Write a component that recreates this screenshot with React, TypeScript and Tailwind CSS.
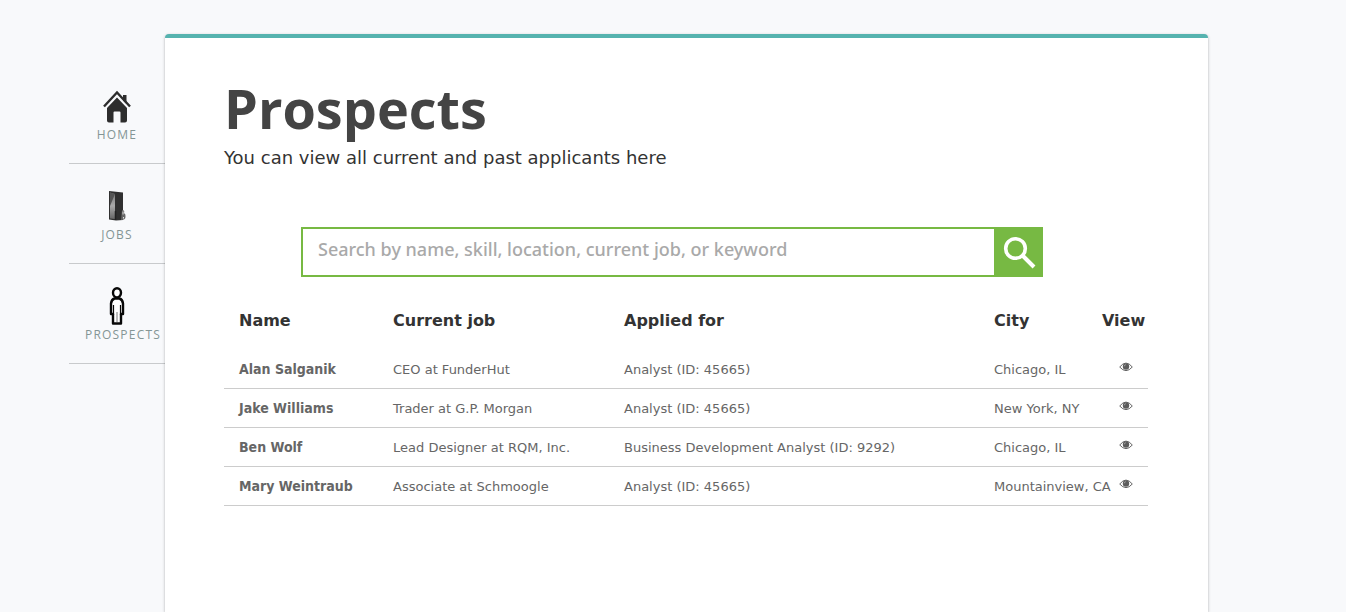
import React from "react";

function HomeIcon() {
  return (
    <svg viewBox="0 0 28 34" className="h-[34px] w-7" aria-hidden="true">
      <path d="M20 6h3.500v9L20 11.500z" fill="#2d2d2d" />
      <path d="M1 17.500 14 3.500l13 14" fill="none" stroke="#2d2d2d" strokeWidth="2.400" />
      <path d="M14 8.500 24 19v12.500q0 2-2 2h-4.500V23.500q0-1-1-1h-5q-1 0-1 1v10H6q-2 0-2-2V19z" fill="#2d2d2d" />
    </svg>
  );
}

function DoorIcon() {
  return (
    <svg viewBox="0 0 28 34" className="h-[34px] w-7" aria-hidden="true">
      <defs>
        <linearGradient id="glass" x1="0" y1="0" x2="0" y2="1">
          <stop offset="0" stopColor="#777" />
          <stop offset="0.500" stopColor="#aaa" />
          <stop offset="1" stopColor="#666" />
        </linearGradient>
      </defs>
      <path d="M6 2 20 3.500V31l-7 .5L6 30.500z" fill="#303030" />
      <path d="M7 3.500 12 5v25l-5-.5z" fill="url(#glass)" />
      <path d="M12 5 7 17V3.500z" fill="#555" />
      <path d="M12.500 22v9" stroke="#222" strokeWidth="1.500" />
      <path d="M19 21q3 0 2 3 2 1 1.500 4 0 3-4.500 3z" fill="#666" />
      <path d="M20 22.500v3M20.500 28v1.500" stroke="#ddd" strokeWidth="1" />
    </svg>
  );
}

function PersonIcon() {
  return (
    <svg viewBox="0 0 18 38" className="h-[38px] w-[18px]" aria-hidden="true">
      <g fill="#fff" stroke="#080808" strokeWidth="2.400">
        <path d="M6.500 11.500h5q3 1 3.500 5V27h-2v9.500H5V27H3V16.500q.5-4 3.500-5z" strokeLinejoin="round" />
        <ellipse cx="9" cy="5.800" rx="4" ry="4.600" />
        <path d="M5.500 18v10M12.500 18v10" strokeWidth="1.200" />
        <path d="M9 25v10" stroke="#777" strokeWidth="1" />
      </g>
    </svg>
  );
}

function EyeIcon() {
  return (
    <svg viewBox="0 0 14 10" className="h-[10px] w-[14px]" aria-hidden="true">
      <path d="M.7 5Q7-2.800 13.300 5 7 12.300.7 5z" fill="none" stroke="#666" strokeWidth="1" />
      <circle cx="7" cy="4.500" r="3.200" fill="#5c5c5c" />
      <path d="M5.300 4.300Q5.400 2.800 6.800 2.700" fill="none" stroke="#bbb" strokeWidth=".7" />
    </svg>
  );
}

const navItems = [
  { label: "HOME", icon: <HomeIcon /> },
  { label: "JOBS", icon: <DoorIcon /> },
  { label: "PROSPECTS", icon: <PersonIcon /> },
];

const prospects = [
  { name: "Alan Salganik", job: "CEO at FunderHut", applied: "Analyst (ID: 45665)", city: "Chicago, IL" },
  { name: "Jake Williams", job: "Trader at G.P. Morgan", applied: "Analyst (ID: 45665)", city: "New York, NY" },
  { name: "Ben Wolf", job: "Lead Designer at RQM, Inc.", applied: "Business Development Analyst (ID: 9292)", city: "Chicago, IL" },
  { name: "Mary Weintraub", job: "Associate at Schmoogle", applied: "Analyst (ID: 45665)", city: "Mountainview, CA" },
];

export default function App() {
  return (
    <div className="flex min-h-screen bg-[#f8f9fb] pt-[34px] pr-[138px] pl-[69px] font-['DejaVu_Sans',sans-serif] text-[#333]">
      <nav className="w-24 shrink-0 pt-[30px]">
        <ul>
          {navItems.map((item) => (
            <li key={item.label} className="h-[100px] border-b border-[#c8cacc]">
              <a
                href="#"
                className="flex h-full flex-col items-center justify-end px-4 pb-5 font-['Open_Sans',sans-serif] text-xs leading-4 tracking-widest text-[#849595]"
              >
                <span className="flex h-10 items-start justify-center">
                  <span className="flex h-[38px] items-center">{item.icon}</span>
                </span>
                <span className="block w-full text-center whitespace-nowrap">{item.label}</span>
              </a>
            </li>
          ))}
        </ul>
      </nav>

      <main className="min-w-0 flex-1 rounded-t border-t-4 border-[#56b3af] bg-white pt-[35px] pr-[60px] pl-[59px] shadow-[0_1px_3px_rgba(0,0,0,0.3)]">
        <h1 className="font-['Open_Sans',sans-serif] text-[54px] leading-[71px] font-bold text-[#444]">Prospects</h1>
        <p className="text-lg leading-7">You can view all current and past applicants here</p>

        <form className="mr-[105px] ml-[77px] mt-[55px] flex h-[50px]" onSubmit={(e) => e.preventDefault()}>
          <input
            type="search"
            aria-label="Search prospects"
            placeholder="Search by name, skill, location, current job, or keyword"
            className="min-w-0 flex-1 border-2 border-r-0 border-[#77b943] bg-white px-[15px] pb-1.5 font-['Noto_Sans',sans-serif] text-lg font-medium outline-none placeholder:text-[#a9a9a9]"
          />
          <button type="submit" aria-label="Search" className="flex w-[49px] items-center justify-center bg-[#77b943] pt-0.5">
            <svg viewBox="0 0 34 34" className="size-[34px]" fill="none" stroke="#fff" aria-hidden="true">
              <circle cx="13.500" cy="12.500" r="9.800" strokeWidth="3.600" />
              <path d="M20.500 19.500 32 31" strokeWidth="4" />
            </svg>
          </button>
        </form>

        <table className="mt-6 w-full table-fixed border-collapse text-left whitespace-nowrap">
          <colgroup>
            <col className="w-[16.67%]" />
            <col className="w-[25%]" />
            <col />
            <col className="w-[108px]" />
            <col className="w-[61px]" />
          </colgroup>
          <thead>
            <tr className="h-12 border-b border-transparent text-base leading-6 font-bold">
              <th className="pb-2 pl-[15px]">Name</th>
              <th className="pb-2 pl-[15px]">Current job</th>
              <th className="pb-2 pl-[15px]">Applied for</th>
              <th className="pb-2 pl-[15px]">City</th>
              <th className="pb-2 pl-[15px]">View</th>
            </tr>
          </thead>
          <tbody className="text-[13px] leading-5 text-[#666]">
            {prospects.map((p) => (
              <tr key={p.name} className="h-[39px] border-b border-[#ccc]">
                <th scope="row" className="pl-[15px] font-['DejaVu_Sans_Condensed','DejaVu_Sans',sans-serif] text-sm font-bold">{p.name}</th>
                <td className="pt-0.5 pl-[15px]">{p.job}</td>
                <td className="pt-0.5 pl-[15px]">{p.applied}</td>
                <td className="pt-0.5 pl-[15px]">{p.city}</td>
                <td className="pr-[15px]">
                  <a href="#" aria-label={`View ${p.name}`} className="flex justify-end pb-1">
                    <EyeIcon />
                  </a>
                </td>
              </tr>
            ))}
          </tbody>
        </table>
      </main>
    </div>
  );
}
